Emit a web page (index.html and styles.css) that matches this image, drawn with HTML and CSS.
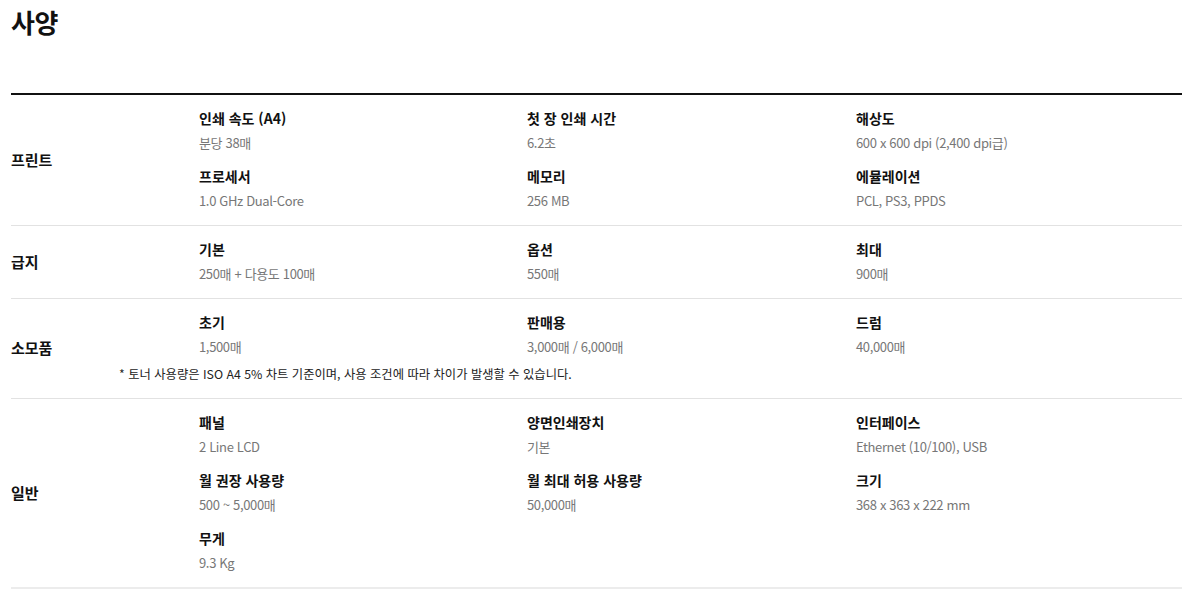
FILE: index.html
```html
<!DOCTYPE html>
<html lang="ko">
<head>
<meta charset="utf-8">
<link rel="stylesheet" href="styles.css">
</head>
<body>
<section class="spec">
  <h2 class="spec-title">사양</h2>
  <div class="spec-table">
    <div class="spec-row">
      <div class="spec-label">프린트</div>
      <div class="spec-content">
        <div class="spec-grid">
          <div class="item"><div class="name">인쇄 속도 (A4)</div><div class="val">분당 38매</div></div>
          <div class="item"><div class="name">첫 장 인쇄 시간</div><div class="val">6.2초</div></div>
          <div class="item"><div class="name">해상도</div><div class="val">600 x 600 dpi (2,400 dpi급)</div></div>
          <div class="item"><div class="name">프로세서</div><div class="val">1.0 GHz Dual-Core</div></div>
          <div class="item"><div class="name">메모리</div><div class="val">256 MB</div></div>
          <div class="item"><div class="name">에뮬레이션</div><div class="val">PCL, PS3, PPDS</div></div>
        </div>
      </div>
    </div>
    <div class="spec-row">
      <div class="spec-label">급지</div>
      <div class="spec-content">
        <div class="spec-grid">
          <div class="item"><div class="name">기본</div><div class="val">250매 + 다용도 100매</div></div>
          <div class="item"><div class="name">옵션</div><div class="val">550매</div></div>
          <div class="item"><div class="name">최대</div><div class="val">900매</div></div>
        </div>
      </div>
    </div>
    <div class="spec-row">
      <div class="spec-label">소모품</div>
      <div class="spec-content">
        <div class="spec-grid">
          <div class="item"><div class="name">초기</div><div class="val">1,500매</div></div>
          <div class="item"><div class="name">판매용</div><div class="val">3,000매 / 6,000매</div></div>
          <div class="item"><div class="name">드럼</div><div class="val">40,000매</div></div>
        </div>
        <p class="note">* 토너 사용량은 ISO A4 5% 차트 기준이며, 사용 조건에 따라 차이가 발생할 수 있습니다.</p>
      </div>
    </div>
    <div class="spec-row">
      <div class="spec-label">일반</div>
      <div class="spec-content">
        <div class="spec-grid">
          <div class="item"><div class="name">패널</div><div class="val">2 Line LCD</div></div>
          <div class="item"><div class="name">양면인쇄장치</div><div class="val">기본</div></div>
          <div class="item"><div class="name">인터페이스</div><div class="val">Ethernet (10/100), USB</div></div>
          <div class="item"><div class="name">월 권장 사용량</div><div class="val">500 ~ 5,000매</div></div>
          <div class="item"><div class="name">월 최대 허용 사용량</div><div class="val">50,000매</div></div>
          <div class="item"><div class="name">크기</div><div class="val">368 x 363 x 222 mm</div></div>
          <div class="item"><div class="name">무게</div><div class="val">9.3 Kg</div></div>
        </div>
      </div>
    </div>
  </div>
</section>
</body>
</html>
```
FILE: styles.css
```css
* { box-sizing: border-box; }
html, body { margin: 0; padding: 0; background: #fff; }
body {
  font-family: "Noto Sans CJK KR", "Noto Sans", sans-serif;
  color: #111;
}
.spec { padding: 0 7px 0 11px; }
.spec-title {
  margin: 0;
  padding-top: 2px;
  height: 93px;
  font-size: 26px;
  line-height: 40px;
  font-weight: 700;
  letter-spacing: -0.5px;
}
.spec-table { border-top: 2px solid #111; }
.spec-row {
  display: flex;
  align-items: center;
  border-bottom: 1px solid #e2e2e2;
  padding: 11px 0 12px;
}
.spec-row:last-child { border-bottom: 2px solid #ececec; }
.spec-label {
  width: 188px;
  flex: none;
  font-size: 15px;
  font-weight: 700;
  line-height: 24px;
}
.spec-content { flex: 1; }
.spec-grid {
  display: grid;
  grid-template-columns: 328px 329px 1fr;
  row-gap: 9px;
}
.name {
  font-size: 14px;
  font-weight: 700;
  line-height: 24px;
  color: #111;
}
.val {
  margin-top: 1px;
  font-size: 13px;
  line-height: 24px;
  letter-spacing: -0.35px;
  color: #777;
}
.note {
  margin: 3px 0 0 -80px;
  font-size: 12.3px;
  line-height: 24px;
  color: #222;
}
```
